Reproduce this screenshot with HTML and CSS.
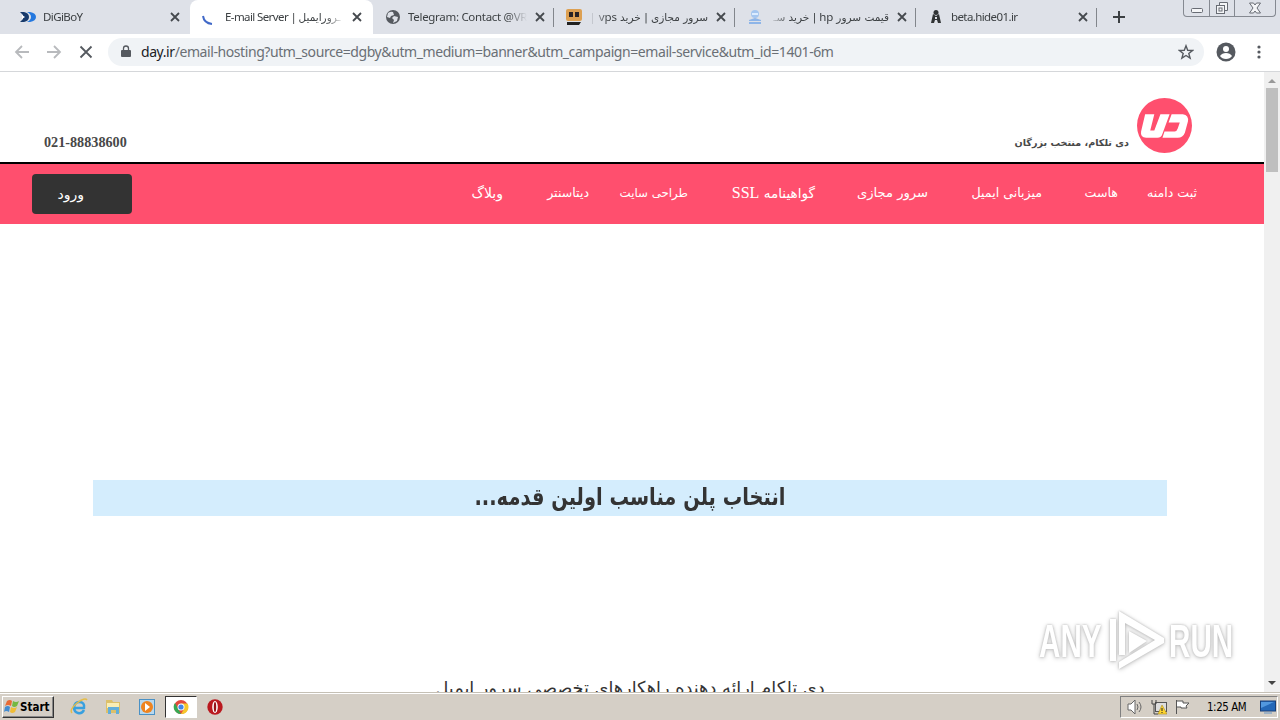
FILE: index.html
```html
<!DOCTYPE html>
<html lang="en">
<head>
    <meta charset="UTF-8">
    <meta name="viewport" content="width=device-width, initial-scale=1.0">
    <title>E-mail Server</title>
    <link rel="stylesheet" href="styles.css">
</head>
<body>

<!-- Tab strip -->
<div class="tabs">
    <div class="tab first">
        <svg class="favicon" viewBox="0 0 16 16"><path d="M0 3h4q5 1 5 5t-5 5H0l3-3V6z" fill="#173a6b"/><path d="M7 3h3q6 1 6 5t-6 5H7q4-2 4-5T7 3" fill="#2478df"/><path d="M2 6l3 2-3 2" fill="#fff"/></svg>
        <span class="title">DiGiBoY</span>
        <svg class="close" viewBox="0 0 10 10"><path d="M1 1l8 8M9 1l-8 8"/></svg>
    </div>
    <div class="tab active">
        <svg class="favicon" viewBox="0 0 16 16"><path d="M1 7q1 7 9 8" fill="none" stroke="#4169c8" stroke-width="2"/></svg>
        <span class="title">E-mail Server | <span class="fa" dir="rtl">ـرورایمیل</span></span>
        <svg class="close" viewBox="0 0 10 10"><path d="M1 1l8 8M9 1l-8 8"/></svg>
    </div>
    <div class="tab">
        <svg class="favicon" viewBox="0 0 16 16"><circle cx="8" cy="8" r="7" fill="#55595f"/><path d="M3 4q3-2 5-1l1 3-3 1-1 2-3-1M9 7l4 1-1 4-4 2 1-3-2-2" fill="#dee1e8"/></svg>
        <span class="title telegram">Telegram: Contact @VR</span>
        <svg class="close" viewBox="0 0 10 10"><path d="M1 1l8 8M9 1l-8 8"/></svg>
    </div>
    <div class="tab">
        <svg class="favicon" viewBox="0 0 16 16"><rect width="16" height="12" rx="2" fill="#dda052"/><path d="M3 3h4v5H3zM9 3h4v5H9z" fill="#292325"/><path d="M1 13h14l-2 3H1z" fill="#222"/></svg>
        <span class="title rtl" dir="rtl"><span class="fa">سرور مجازی | خرید</span> vps |</span>
        <svg class="close" viewBox="0 0 10 10"><path d="M1 1l8 8M9 1l-8 8"/></svg>
    </div>
    <div class="tab">
        <svg class="favicon" viewBox="0 0 16 16"><circle cx="8" cy="5" r="4" fill="#a5c6ef"/><path d="M5 4h6v2H5z" fill="#dcecff"/><path d="M2 11l6-2 6 2v1H2zM2 13h12v2H2z" fill="#8eb5e8"/></svg>
        <span class="title rtl" dir="rtl"><span class="fa">قیمت سرور</span> hp <span class="fa">| خرید سـ</span></span>
        <svg class="close" viewBox="0 0 10 10"><path d="M1 1l8 8M9 1l-8 8"/></svg>
    </div>
    <div class="tab">
        <svg class="favicon" viewBox="0 0 16 16"><circle cx="8" cy="3.500" r="2.500" fill="#303335"/><path d="M5 5l3 2 3-2 2 9h-3l-1-3H7l-1 3H3z" fill="#303335"/><path d="M7 8h2v2H7z" fill="#dee1e8"/></svg>
        <span class="title">beta.hide01.ir</span>
        <svg class="close" viewBox="0 0 10 10"><path d="M1 1l8 8M9 1l-8 8"/></svg>
    </div>
    <svg class="new-tab" viewBox="0 0 12 12"><path d="M6 0v12M0 6h12"/></svg>
    <div class="window-buttons">
        <span><svg viewBox="0 0 14 14"><rect x="1.500" y="7.500" width="11" height="4" rx="1"/></svg></span>
        <span><svg viewBox="0 0 14 14"><path d="M4.500 4V1.500h8v8H10"/><rect x="1.500" y="4.500" width="8" height="8"/><rect x="4" y="7" width="3" height="3"/></svg></span>
        <span><svg viewBox="0 0 14 14"><path d="M1.500 2h4L7 4l1.500-2h4L9 7l3.500 5h-4L7 10l-1.500 2h-4L5 7z"/></svg></span>
    </div>
</div>

<!-- Address bar -->
<div class="toolbar">
    <svg class="nav-icon" viewBox="0 0 16 16"><path d="M15 8H2M8 2L2 8l6 6"/></svg>
    <svg class="nav-icon" viewBox="0 0 16 16"><path d="M1 8h13M8 2l6 6-6 6"/></svg>
    <svg class="nav-icon dark" viewBox="0 0 16 16"><path d="M2.500 2.500l11 11M13.500 2.500l-11 11"/></svg>
    <div class="address">
        <svg class="lock" viewBox="0 0 10 13"><path d="M1 5h8q1 0 1 1v5q0 1-1 1H1q-1 0-1-1V6q0-1 1-1" fill="#55595f"/><path d="M2.500 6V3.500a2.500 2.500 0 0 1 5 0V6" fill="none" stroke="#55595f" stroke-width="1.300"/></svg>
        <span class="url"><b>day.ir</b>/email-hosting?utm_source=dgby&amp;utm_medium=banner&amp;utm_campaign=email-service&amp;utm_id=1401-6m</span>
        <svg class="star" viewBox="0 0 16 16"><path d="M8 1.800l1.700 4.500 4.800.2-3.700 3 1.300 4.600L8 11.500l-4.100 2.600 1.300-4.600-3.700-3 4.800-.2z"/></svg>
    </div>
    <svg class="profile" viewBox="0 0 20 20"><circle cx="10" cy="10" r="9.500" fill="#55595f"/><circle cx="10" cy="7" r="3" fill="#fff"/><path d="M4 14q2-3 6-3t6 3q-2 3-6 3t-6-3" fill="#fff"/></svg>
    <svg class="menu" viewBox="0 0 4 14"><circle cx="2" cy="2" r="1.600"/><circle cx="2" cy="7" r="1.600"/><circle cx="2" cy="12" r="1.600"/></svg>
</div>

<!-- Page and its scrollbar -->
<div class="viewport">
    <div class="page" dir="rtl">
        <header>
            <svg class="logo" viewBox="0 0 54 54"><circle cx="27" cy="27" r="27" fill="#ff4f6e"/><path d="M8 16h9l-4 16h4l6-16h9l-7 19q-1 4-5 4H9q-6 0-5-6z" fill="#fff"/><path d="M34 16h11q6 1 5 7l-3 11q-2 5-7 5H25l2-6h10q2 0 3-3l2-6H31z" fill="#fff"/></svg>
            <p class="slogan fa">دی تلکام، منتخب بزرگان</p>
            <p class="phone" dir="ltr">021-88838600</p>
        </header>
        <nav>
            <a class="domain">ثبت دامنه</a>
            <a class="host">هاست</a>
            <a class="mail">میزبانی ایمیل</a>
            <a class="server">سرور مجازی</a>
            <a class="ssl">گواهینامه <span>SSL</span></a>
            <a class="design">طراحی سایت</a>
            <a class="datacenter">دیتاسنتر</a>
            <a class="blog">وبلاگ</a>
            <button>ورود</button>
        </nav>
        <main>
            <h1><span>انتخاب پلن مناسب اولین قدمه...</span></h1>
            <h2>دی تلکام ارائه دهنده راهکارهای تخصصی سرور ایمیل</h2>
        </main>
    </div>
    <div class="scrollbar">
        <i class="up"></i>
        <div class="thumb"></div>
        <i class="down"></i>
    </div>
    <div class="watermark">
        <span>ANY</span>
        <svg viewBox="0 0 60 64"><path d="M11 10H5v42h6zM14 2v44h6V14l30 17-36 22v7l45-26v-5zM24 22v22l18-12z"/></svg>
        <span>RUN</span>
    </div>
</div>

<!-- Taskbar -->
<div class="taskbar">
    <div class="start">
        <svg viewBox="0 0 16 16"><path d="M3 2q3-2 5 0L7 7Q4 5 1 7z" fill="#e86a35"/><path d="M9 2q3 2 6 0l-2 5q-3 2-5 0z" fill="#75b843"/><path d="M1 8q3-2 5 0l-1 5q-3-2-5 0z" fill="#438bd0"/><path d="M7 8q3 2 6 0l-2 5q-3 2-5 0z" fill="#f0bd37"/></svg>
        Start
    </div>
    <div class="task"><svg viewBox="0 0 18 18"><path d="M14 12q-2 4-6 3-4-1-4-6 1-5 5-5 6 0 5 6H5" fill="none" stroke="#38a0df" stroke-width="2.500"/><path d="M2 15Q-1 12 7 5q8-6 10-3" fill="none" stroke="#e5bd49" stroke-width="1.500"/></svg></div>
    <div class="task"><svg viewBox="0 0 18 18"><path d="M2 2h6l1 2h7v11H2z" fill="#dcc06a"/><path d="M3 5h12v5H3z" fill="#f9edb4"/><path d="M4 16V9h11v7h-3v-4H7v4z" fill="#62aeda"/></svg></div>
    <div class="task"><svg viewBox="0 0 18 18"><rect x="1.500" y="1.500" width="15" height="15" fill="#b8d8ee" stroke="#4a91c5"/><circle cx="9" cy="9" r="6" fill="#ef8420"/><path d="M7 5l5 4-5 4z" fill="#fff"/></svg></div>
    <div class="task open"><svg viewBox="0 0 18 18"><circle cx="9" cy="9" r="7" fill="#e3493b"/><path d="M3 5l6 11a7 7 0 0 1-6-11" fill="#36a853"/><path d="M9 5.500h6.500A7 7 0 0 1 9 16l3-5z" fill="#f6c72b"/><circle cx="9" cy="9" r="3.500" fill="#fff"/><circle cx="9" cy="9" r="2.600" fill="#4285e8"/></svg></div>
    <div class="task"><svg viewBox="0 0 18 18"><circle cx="9" cy="9" r="7.700" fill="#ba191f"/><ellipse cx="9" cy="9" rx="2.800" ry="6" fill="#fff"/><ellipse cx="9" cy="9" rx="1.200" ry="5" fill="#971318"/></svg></div>
    <div class="tray">
        <svg viewBox="0 0 16 16"><path d="M1 5h3l4-4v14l-4-4H1z" fill="#fff" stroke="#666"/><path d="M10 5q2 3 0 6M12 3q4 5 0 10" fill="none" stroke="#666"/></svg>
        <svg viewBox="0 0 16 16"><rect x="4.500" y="3.500" width="11" height="9" fill="#ddd" stroke="#555"/><path d="M1 1v4h4V1M3 5v10h4" fill="none" stroke="#444"/><path d="M11 6l5 9H7z" fill="#ffd52e" stroke="#a88b20" stroke-width=".6"/><path d="M11 9v3M11 13v1" stroke="#222"/></svg>
        <svg viewBox="0 0 16 16"><path d="M1.500 1v14M2 2h6v2h6l-3 3 1 2H6V8H2" fill="#fff" stroke="#555"/></svg>
        <span class="clock">1:25 AM</span>
        <svg viewBox="0 0 16 16"><rect x=".5" y="2" width="15" height="10" fill="#2468b8" stroke="#183f79"/><path d="M1 3h13L1 9z" fill="#5298df"/><path d="M4 14h8" stroke="#6694c3"/></svg>
    </div>
</div>

</body>
</html>
```

FILE: styles.css
```css
* {
    box-sizing: border-box;
}
body {
    margin: 0;
    width: 1280px;
    height: 720px;
    display: flex;
    flex-direction: column;
    overflow: hidden;
    background: #fff;
    font-family: "Noto Sans", "DejaVu Sans", sans-serif;
}
svg {
    flex: none;
    display: block;
}
p, h1, h2 {
    margin: 0;
}
.fa {
    font-family: "DejaVu Sans", sans-serif;
}
/* Tabs */
.tabs {
    height: 34px;
    flex: none;
    display: flex;
    background: #dee1e8;
    padding-left: 8px;
}
.tab {
    width: 181px;
    flex: none;
    display: flex;
    align-items: center;
    padding: 0 10px 0 12px;
    position: relative;
    color: #3c4043;
    font-size: 11.5px;
}
.tab.first {
    width: 182px;
}
.tab.active {
    width: 183px;
    background: #fff;
    border-radius: 8px 8px 0 0;
}
.tab + .tab:not(.active)::after {
    content: "";
    position: absolute;
    right: 0;
    top: 8px;
    width: 1px;
    height: 19px;
    background: #82868c;
}
.favicon {
    width: 16px;
    height: 16px;
}
.title {
    width: 119px;
    margin: 0 8px 0 7px;
    flex: none;
    overflow: hidden;
    white-space: nowrap;
    line-height: 24px;
    letter-spacing: -.6px;
    mask-image: linear-gradient(to right, #000 84%, transparent);
}
.title.telegram {
    letter-spacing: -.3px;
}
.tab:last-of-type .title {
    letter-spacing: -.5px;
}
.title.rtl {
    letter-spacing: 0;
    mask-image: linear-gradient(to left, #000 84%, transparent);
}
.title .fa {
    font-size: 10.5px;
    letter-spacing: 0;
}
.close {
    width: 10px;
    height: 10px;
    stroke: #45494e;
    stroke-width: 1.8;
}
.new-tab {
    width: 12px;
    height: 12px;
    margin: 11px 0 0 16px;
    stroke: #3c4043;
    stroke-width: 2;
}
.window-buttons {
    width: 93px;
    height: 17px;
    margin: 0 4px 0 auto;
    display: flex;
    border: 1px solid #858991;
    border-top: 0;
    border-radius: 0 0 4px 4px;
}
.window-buttons span {
    width: 25px;
    display: flex;
    justify-content: center;
}
.window-buttons span + span {
    border-left: 1px solid #858991;
}
.window-buttons span:last-child {
    flex: 1;
}
.window-buttons svg {
    width: 14px;
    height: 14px;
    margin-top: 1px;
    fill: #f4f5f7;
    stroke: #686c74;
}
/* Toolbar */
.toolbar {
    height: 38px;
    flex: none;
    display: flex;
    align-items: center;
    padding: 0 19px 2px 14px;
    border-bottom: 1px solid #d5d7da;
}
.nav-icon {
    width: 16px;
    height: 16px;
    margin-right: 16px;
    fill: none;
    stroke: #b8babd;
    stroke-width: 1.8;
}
.nav-icon.dark {
    margin-right: 14px;
    stroke: #55595f;
}
.address {
    width: 1096px;
    height: 28px;
    display: flex;
    align-items: center;
    padding: 0 10px 0 13px;
    border-radius: 14px;
    background: #f0f3f6;
}
.lock {
    width: 10px;
    height: 13px;
}
.url {
    margin-left: 10px;
    color: #6a6f75;
    font-size: 14px;
    letter-spacing: -.42px;
    white-space: nowrap;
}
.url b {
    color: #202124;
    font-weight: normal;
}
.star {
    width: 16px;
    height: 16px;
    margin-left: auto;
    fill: none;
    stroke: #55595f;
    stroke-width: 1.4;
}
.profile {
    width: 20px;
    height: 20px;
    margin: 0 0 0 12px;
}
.menu {
    width: 4px;
    height: 14px;
    margin-left: auto;
    fill: #55595f;
}
/* Website */
.viewport {
    height: 620px;
    flex: none;
    display: flex;
    position: relative;
}
.page {
    width: 1264px;
    overflow: hidden;
    font-family: "Liberation Serif", "DejaVu Sans", serif;
}
header {
    height: 92px;
    display: flex;
    align-items: flex-start;
    padding: 26px 72px 0 44px;
    border-bottom: 2px solid #000;
    color: #484848;
}
.logo {
    width: 55px;
    height: 55px;
}
.slogan {
    margin: 36px 8px 0 0;
    font-size: 9.6px;
    font-weight: bold;
    line-height: 18px;
    white-space: nowrap;
}
.phone {
    margin: 35px auto 0 0;
    font-size: 14.2px;
    font-weight: bold;
    line-height: 18px;
}
nav {
    height: 60px;
    display: flex;
    align-items: flex-start;
    padding: 10px 67px 0 32px;
    background: #ff4f6e;
    color: #fff;
    font-family: "DejaVu Sans", sans-serif;
    font-size: 12.6px;
}
nav a {
    flex: none;
    white-space: nowrap;
    line-height: 38px;
}
nav span {
    font-family: "Liberation Serif", serif;
    font-size: 16px;
}
.domain {
    width: 49px;
    margin-left: 30px;
}
.host {
    width: 32px;
    margin-left: 44px;
}
.mail {
    width: 70px;
    margin-left: 44px;
}
.server {
    width: 72px;
    margin-left: 41px;
    font-size: 13.1px;
}
.ssl {
    width: 83px;
    margin-left: 44px;
    font-size: 13.6px;
}
.design {
    width: 69px;
    margin-left: 30px;
    font-size: 11.8px;
}
.datacenter {
    width: 42px;
    margin-left: 44px;
}
.blog {
    width: 32px;
    font-size: 14px;
}
nav button {
    width: 100px;
    height: 40px;
    margin-right: auto;
    padding: 0 48px 1px 0;
    border: 0;
    border-radius: 4px;
    background: #333;
    color: #fff;
    font-family: "DejaVu Sans", sans-serif;
    font-size: 14px;
    text-align: right;
}
main {
    padding: 256px 97px 0 93px;
    color: #333;
    text-align: center;
}
h1 {
    height: 36px;
    background: #d4edfd;
    font-family: "DejaVu Sans", sans-serif;
    font-size: 24px;
    line-height: 34px;
    white-space: nowrap;
}
h1 span {
    display: inline-block;
    transform: scaleX(.81);
}
h2 {
    margin-top: 156px;
    font-family: "DejaVu Sans", sans-serif;
    font-size: 17.7px;
    font-weight: normal;
    line-height: 32px;
    white-space: nowrap;
}
.scrollbar {
    width: 16px;
    display: flex;
    flex-direction: column;
    align-items: center;
    background: #f0f0f0;
}
.scrollbar i {
    border: 4px solid transparent;
}
.scrollbar .up {
    margin-top: 3px;
    border-bottom-color: #999;
}
.scrollbar .down {
    margin: auto 0 3px;
    border-top-color: #444;
}
.thumb {
    width: 12px;
    height: 84px;
    margin-top: 5px;
    background: #bfbfbf;
}
.watermark {
    position: absolute;
    left: 1039px;
    top: 537px;
    display: flex;
    align-items: center;
    color: #fff;
    font-family: "Liberation Sans", sans-serif;
    font-size: 47px;
    font-weight: bold;
    line-height: 64px;
    filter: drop-shadow(0 0 1px #bbb) drop-shadow(0 1px 2px #ccc);
}
.watermark span {
    width: 64px;
    transform: scaleX(.63);
    transform-origin: left;
}
.watermark svg {
    width: 60px;
    height: 64px;
    margin: 0 4px 0 2px;
    fill: #fff;
    fill-rule: evenodd;
}
/* Taskbar */
.taskbar {
    height: 28px;
    flex: none;
    display: flex;
    align-items: center;
    padding: 1px 2px 0 2px;
    background: #d5cfc6;
    border-top: 1px solid #c5c0b5;
    box-shadow: inset 0 1px #fff;
}
.start {
    width: 52px;
    height: 22px;
    display: flex;
    align-items: center;
    margin-right: 9px;
    border: 1px solid;
    border-color: #fff #333 #333 #fff;
    box-shadow: inset -1px -1px #888;
    color: #000;
    font-family: "DejaVu Sans Condensed", "DejaVu Sans", sans-serif;
    font-size: 11.5px;
    font-weight: bold;
}
.start svg {
    width: 16px;
    height: 16px;
    margin: 0 0 0 1px;
}
.task {
    width: 32px;
    height: 22px;
    margin-right: 2px;
    display: flex;
    align-items: center;
    justify-content: center;
}
.task svg {
    width: 18px;
    height: 18px;
}
.task.open {
    background: #fff;
    border: 1px solid;
    border-color: #333 #fff #fff #333;
}
.tray {
    width: 158px;
    height: 22px;
    display: flex;
    align-items: center;
    margin-left: auto;
    padding: 0 1px 0 6px;
    border: 1px solid;
    border-color: #808080 #fff #fff #808080;
}
.tray svg {
    width: 16px;
    height: 16px;
    margin-right: 8px;
}
.clock {
    width: 44px;
    margin: 0 9px 0 8px;
    color: #000;
    font-family: "DejaVu Sans Condensed", "DejaVu Sans", sans-serif;
    font-size: 11.4px;
    letter-spacing: -.4px;
    white-space: nowrap;
}
.tray svg:last-child {
    margin-right: 0;
}
```
